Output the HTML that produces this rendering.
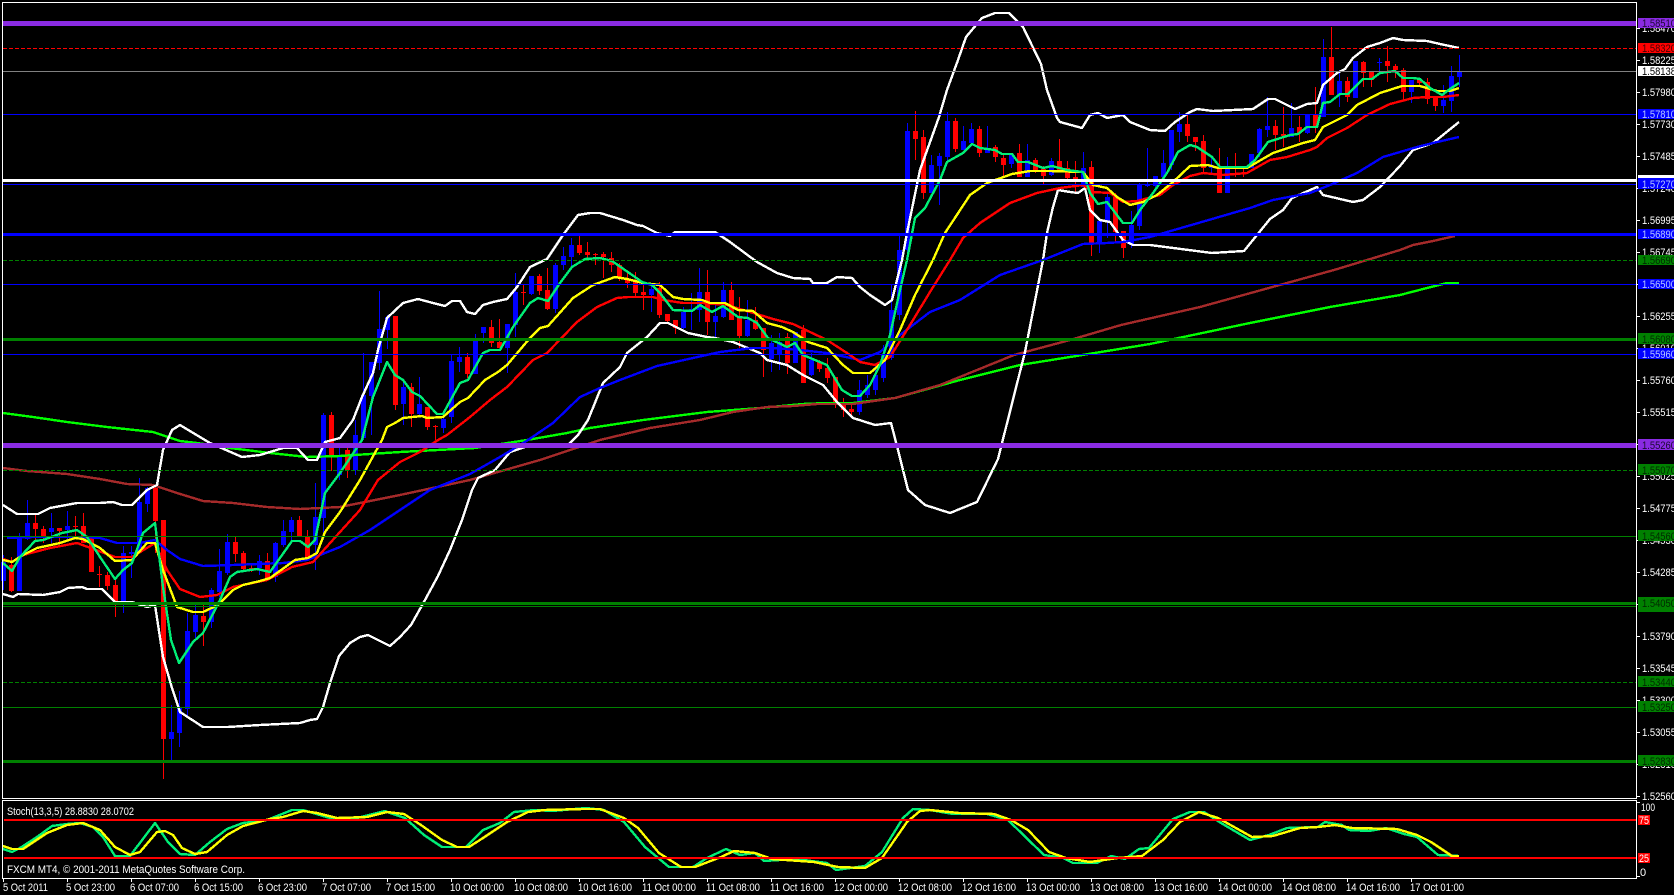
<!DOCTYPE html>
<html>
<head>
<meta charset="utf-8">
<title>FXCM MT4 chart</title>
<style>
html,body{margin:0;padding:0;background:#000;width:1674px;height:895px;overflow:hidden}
svg{display:block}
text{font-family:"Liberation Sans",sans-serif;font-size:11px;fill:#fff}
.l{fill:none;stroke-width:2.4;stroke-linejoin:round;shape-rendering:crispEdges}
.h{shape-rendering:crispEdges;fill:none}
</style>
</head>
<body>
<svg xmlns="http://www.w3.org/2000/svg" width="1674" height="895" viewBox="0 0 1674 895">
<rect width="1674" height="895" fill="#000"/>

<g transform="translate(.5,0)" class="h">
<path stroke="#0000ff" stroke-width="1" d="M3 555V590M19 533V591M27 500V540M51 513V543M67 511V540M123 546V613M131 546V578M139 478V553M147 487V512M171 705V760M179 691V747M187 613V717M195 603V638M211 588V628M219 549V597M227 534V575M259 555V575M275 542V582M283 520V547M291 517V543M315 483V570M323 413V540M339 445V480M355 420V475M363 353V440M371 362V435M379 291V370M387 315V349M403 380V425M419 377V415M443 412V433M451 355V423M459 347V372M475 334V374M483 327V343M507 324V373M515 273V337M531 276V295M555 263V313M563 247V270M571 238V267M651 285V312M683 307V329M691 293V330M699 268V322M715 303V337M723 282V318M747 300V337M771 335V372M779 333V370M795 332V363M811 353V376M859 380V415M867 375V398M875 365V395M883 345V382M891 285V360M899 235V320M907 123V260M931 155V193M939 153V205M947 112V162M963 126V150M971 123V143M987 126V153M1011 153V168M1027 144V177M1051 158V176M1083 152V187M1099 221V253M1107 193V238M1131 211V248M1139 183V230M1147 148V187M1155 176V187M1163 150V178M1171 130V170M1179 112V142M1211 157V175M1227 157V193M1251 154V168M1259 128V157M1267 97V137M1291 103V135M1307 115V134M1323 39V117M1339 70V107M1355 61V98M1379 58V73M1411 80V103M1443 85V113M1451 66V112M1459 55V87"/>
<path stroke="#0000ff" stroke-width="5" d="M3 562V581M19 538V591M27 523V539M51 528V532M67 526V530M123 553V601M131 552V554M139 502V552M147 488V504M171 732V739M179 708V733M187 631V709M195 615V632M211 590V622M219 571V592M227 542V573M259 561V568M275 543V577M283 531V545M291 520V532M315 517V545M323 415V518M339 455V475M355 435V470M363 395V438M371 362V396M379 329V363M387 317V330M403 387V404M419 404V414M443 419V428M451 361V417M459 357V362M475 341V374M483 327V333M507 324V348M515 292V325M531 276V294M555 265V309M563 256V265M571 245V257M651 289V295M683 312V328M691 309V310M699 292V310M715 316V322M723 290V317M747 320V336M771 343V359M779 342V354M795 332V363M811 360V375M859 390V412M867 385V395M875 375V390M883 355V378M891 310V358M899 250V315M907 131V250M931 165V193M939 156V166M947 121V157M963 141V150M971 129V143M987 149V153M1011 154V164M1027 160V177M1051 161V175M1083 168V187M1099 221V244M1107 197V221M1131 225V245M1139 185V226M1147 185V186M1155 176V186M1163 163V177M1171 130V165M1179 124V132M1211 165V168M1227 168V193M1251 154V168M1259 129V153M1267 126V130M1291 128V137M1307 115V133M1323 57V117M1339 81V95M1355 61V98M1379 62V63M1411 80V92M1443 100V106M1451 76V101M1459 71V77"/>
<path stroke="#ff0000" stroke-width="1" d="M11 557V592M35 515V540M43 526V543M59 528V543M75 516V537M83 513V543M91 538V572M99 566V587M107 572V590M115 580V617M155 485V553M163 520V779M203 605V646M235 537V562M243 551V570M251 563V572M267 553V580M299 516V537M307 530V558M331 412V471M347 445V478M395 316V410M411 383V427M427 407V430M435 425V440M467 353V378M491 320V347M499 319V348M523 284V305M539 274V295M547 268V310M579 236V255M587 242V258M595 253V265M603 252V278M611 252V272M619 263V281M627 272V288M635 272V297M643 283V310M659 282V318M667 314V322M675 320V334M707 270V335M731 282V320M739 297V348M755 307V330M763 328V377M787 333V374M803 325V383M819 360V372M827 358V383M835 377V408M843 398V417M851 403V417M915 111V160M923 130V199M955 118V152M979 126V157M995 145V162M1003 153V176M1019 144V177M1035 158V173M1043 166V184M1059 139V172M1067 161V180M1075 161V192M1091 161V256M1115 193V242M1123 231V258M1187 115V142M1195 137V151M1203 135V173M1219 148V193M1235 153V177M1243 167V177M1275 120V150M1283 107V147M1299 116V142M1315 87V133M1331 27V95M1347 77V102M1363 61V87M1371 72V87M1387 46V82M1395 64V78M1403 68V100M1419 78V85M1427 78V104M1435 97V111"/>
<path stroke="#ff0000" stroke-width="5" d="M11 565V591M35 523V529M43 529V537M59 528V531M75 526V527M83 526V543M91 538V572M99 574V575M107 575V586M115 585V602M155 488V521M163 520V739M203 616V622M235 542V554M243 553V569M251 568V570M267 561V578M299 520V537M307 537V558M331 415V455M347 450V470M395 316V405M411 387V414M427 407V427M435 426V427M467 357V374M491 327V343M499 342V348M523 292V293M539 276V291M547 290V309M579 245V253M587 252V255M595 254V255M603 254V257M611 258V265M619 265V277M627 279V283M635 281V293M643 292V295M659 288V315M667 314V321M675 320V328M707 292V322M731 290V320M739 318V336M755 320V329M763 328V350M787 337V363M803 330V383M819 362V369M827 368V378M835 377V403M843 405V410M851 409V412M915 131V139M923 137V193M955 121V149M979 129V153M995 147V157M1003 158V165M1019 153V177M1035 160V170M1043 169V176M1059 161V170M1067 168V178M1075 177V179M1091 167V243M1115 197V232M1123 231V248M1187 124V136M1195 137V142M1203 141V168M1219 167V193M1235 167V168M1243 167V168M1275 126V135M1283 134V136M1299 127V133M1315 115V127M1331 57V95M1347 81V97M1363 62V73M1371 72V80M1387 61V66M1395 66V70M1403 70V92M1419 80V83M1427 82V99M1435 97V106"/>
</g>

<!-- lime MA -->
<polyline class="l" stroke="#00ff00" points="3,413 33,417 67,422 107,427 153,432 180,441 197,443 230,448 270,453 307,457 340,456 400,452 475,448 527,440 567,433 590,428 643,420 707,412 760,408 803,404 827,403 853,403 895,398 960,380 1020,365 1070,357 1150,344 1250,323 1330,307 1400,295 1427,288 1447,283 1459,283"/>
<!-- brown MA -->
<polyline class="l" stroke="#a52a2a" points="3,468 27,471 67,474 100,479 127,484 153,485 177,493 203,501 233,503 267,507 300,509 340,507 400,495 470,480 540,460 600,440 650,428 700,420 733,412 767,407 793,406 817,404 853,404 895,398 940,385 1014,355 1070,340 1121,325 1200,307 1334,270 1400,250 1413,245 1433,241 1455,236"/>
<!-- bollinger upper -->
<polyline class="l" stroke="#ffffff" points="3,505 17,514 38,514 50,508 77,503 100,503 113,502 122,505 132,505 147,490 157,485 163,450 172,430 180,425 210,443 242,457 260,455 283,448 297,448 308,460 317,460 325,442 340,438 353,420 362,397 373,373 378,350 387,318 403,303 418,299 433,303 445,306 452,301 460,301 467,312 475,314 483,305 493,302 507,299 517,287 530,267 547,259 563,235 578,215 590,213 600,213 623,220 637,225 643,226 657,233 670,236 675,232 715,232 730,242 757,262 777,273 793,278 810,279 813,283 827,283 837,277 852,278 860,287 870,295 885,305 892,300 902,260 907,233 920,170 939,117 947,90 958,60 966,37 982,18 995,13 1009,13 1023,27 1041,64 1047,90 1057,118 1060,122 1082,128 1090,115 1098,113 1107,118 1123,115 1130,122 1150,130 1165,131 1175,122 1190,112 1197,109 1213,111 1253,109 1268,99 1275,99 1295,109 1307,104 1317,103 1323,85 1337,73 1345,69 1353,58 1367,47 1380,43 1393,38 1403,40 1427,41 1440,44 1459,48"/>
<!-- bollinger lower -->
<polyline class="l" stroke="#ffffff" points="3,594 13,597 18,594 43,595 60,592 68,588 82,587 87,589 102,589 115,602 132,602 147,607 155,605 163,657 172,688 180,712 203,727 228,727 260,725 300,723 310,720 317,719 323,707 330,683 339,656 350,643 360,637 368,635 378,640 390,646 400,637 411,625 425,600 438,576 450,550 462,520 472,490 478,478 495,470 510,452 525,447 566,447 578,435 588,420 603,383 620,367 627,353 647,337 660,323 668,323 688,333 707,337 715,338 733,342 760,353 767,360 787,365 803,375 823,385 837,402 853,418 875,425 891,423 898,450 908,490 925,505 950,513 977,502 998,459 1025,352 1043,260 1047,233 1053,207 1058,190 1070,192 1078,193 1085,188 1090,210 1100,220 1110,222 1123,240 1133,245 1150,245 1212,253 1244,251 1270,219 1283,210 1292,198 1317,187 1323,195 1353,202 1363,200 1380,187 1400,166 1413,150 1433,143 1459,122"/>
<!-- blue MA -->
<polyline class="l" stroke="#0000ff" points="7,538 33,537 83,537 100,538 117,543 140,543 155,540 167,550 180,559 203,566 233,565 283,563 307,560 320,555 340,547 370,530 400,510 430,490 470,474 500,457 528,440 553,423 580,397 600,388 620,380 657,366 693,358 720,352 753,348 773,348 800,350 827,353 860,360 880,352 900,335 930,312 960,300 1000,275 1043,260 1083,244 1107,243 1123,242 1150,237 1250,208 1273,200 1310,193 1330,185 1357,173 1383,157 1400,152 1417,147 1433,143 1459,137"/>
<!-- red MA -->
<polyline class="l" stroke="#ff0000" points="3,559 12,562 23,555 50,548 77,543 115,557 132,557 155,543 167,570 180,589 200,597 217,595 233,587 267,580 292,567 313,562 340,532 360,510 378,480 400,462 420,452 438,440 447,435 470,417 490,400 507,387 533,360 547,353 577,322 597,307 617,298 628,297 653,297 663,300 683,303 703,303 727,305 740,309 760,315 773,319 793,324 810,332 827,340 847,353 860,362 875,365 890,357 910,325 930,292 950,260 963,238 980,223 1010,203 1037,193 1060,188 1083,185 1093,192 1110,193 1123,202 1137,201 1160,195 1173,185 1190,176 1203,173 1223,175 1247,173 1270,160 1287,157 1310,150 1317,147 1327,138 1347,128 1367,115 1390,104 1413,98 1427,97 1443,97 1459,95"/>
<!-- yellow MA -->
<polyline class="l" stroke="#ffff00" points="3,560 12,562 23,555 37,548 60,543 75,538 83,539 100,548 115,561 132,560 147,543 155,543 163,570 177,607 193,612 203,612 218,605 233,590 243,585 260,581 270,578 295,560 308,558 317,553 325,532 340,512 360,480 382,440 387,427 395,423 403,418 422,416 427,418 443,417 460,402 468,398 485,380 498,372 507,365 530,338 540,328 548,326 573,298 593,285 615,277 627,279 643,283 660,285 673,297 683,299 702,300 710,303 725,303 738,310 753,311 767,323 782,327 793,332 808,342 827,348 843,365 853,373 870,373 885,360 900,330 915,295 933,260 945,233 970,195 987,183 1012,174 1030,171 1050,171 1083,172 1093,185 1107,188 1117,197 1130,205 1143,202 1157,195 1173,182 1190,166 1208,165 1218,168 1247,168 1273,153 1303,143 1315,140 1323,127 1347,115 1357,105 1380,93 1402,86 1420,86 1437,91 1450,91 1459,88"/>
<!-- teal MA -->
<polyline class="l" stroke="#00ee76" points="3,563 12,571 20,557 35,541 43,540 62,533 77,530 87,537 100,557 115,579 123,570 132,563 143,533 155,523 163,587 171,640 179,663 193,642 203,633 220,600 230,577 237,572 257,569 270,572 292,541 300,541 308,547 315,540 325,493 340,473 362,440 373,397 387,362 395,375 403,380 412,392 420,396 437,414 443,414 460,383 468,380 483,353 490,350 500,350 513,327 530,303 538,298 548,301 560,283 572,267 585,259 600,258 612,261 635,277 642,282 652,285 660,293 673,310 692,311 700,305 712,312 723,306 738,317 748,318 757,323 768,338 787,347 795,343 803,355 827,365 842,390 852,396 860,396 870,385 880,365 890,335 900,290 907,260 915,218 925,208 940,180 947,162 963,153 972,144 980,148 995,150 1002,154 1012,154 1018,162 1028,162 1043,168 1052,166 1067,170 1083,172 1090,193 1098,204 1107,202 1123,223 1132,223 1140,210 1153,193 1167,173 1178,152 1190,145 1197,147 1212,157 1220,167 1247,167 1255,160 1268,142 1290,135 1298,134 1307,127 1317,127 1323,103 1330,102 1340,94 1348,94 1363,79 1372,79 1380,73 1395,71 1403,78 1413,78 1420,79 1430,88 1442,95 1450,89 1459,83"/>

<!-- horizontal objects -->
<g class="h">
<rect x="3" y="21" width="1633" height="5" fill="#8a2be2"/>
<path d="M3 48.5H1636" stroke="#ff0000" stroke-dasharray="4 2"/>
<path d="M3 71.5H1636" stroke="#808080"/>
<path d="M3 114.5H1636" stroke="#0000ff"/>
<rect x="3" y="179" width="1633" height="3" fill="#ffffff"/>
<path d="M3 184.5H1636" stroke="#0000ff"/>
<rect x="3" y="233" width="1633" height="3" fill="#0000ff"/>
<path d="M3 260.5H1636" stroke="#008000" stroke-dasharray="4 2"/>
<path d="M3 284.5H1636" stroke="#0000ff"/>
<rect x="3" y="338" width="1633" height="3" fill="#008000"/>
<path d="M3 354.5H1636" stroke="#0000ff"/>
<rect x="3" y="443" width="1633" height="5" fill="#8a2be2"/>
<path d="M3 470.5H1636" stroke="#008000" stroke-dasharray="4 2"/>
<path d="M3 536.5H1636" stroke="#008000"/>
<rect x="3" y="602" width="1633" height="3" fill="#008000"/>
<path d="M3 606.5H1636" stroke="#008000"/>
<path d="M3 682.5H1636" stroke="#008000" stroke-dasharray="4 2"/>
<path d="M3 707.5H1636" stroke="#008000"/>
<rect x="3" y="760" width="1633" height="3" fill="#008000"/>
</g>

<!-- stochastic -->
<polyline class="l" stroke="#00ee76" points="3,849 12,852 20,848 37,837 52,826 67,824 80,823 93,827 103,837 115,856 130,856 155,823 168,842 180,854 195,855 210,842 227,829 243,823 267,820 292,810 303,810 330,818 357,818 385,811 390,813 405,818 424,835 442,847 466,847 483,830 500,823 514,812 535,810 552,811 586,808 604,810 624,822 645,847 669,867 693,867 707,858 726,849 740,855 755,853 764,861 796,859 827,863 836,870 865,866 882,852 903,818 913,809 930,810 953,814 987,814 1008,820 1044,855 1063,858 1073,863 1097,863 1111,856 1125,859 1139,849 1149,848 1173,819 1190,812 1204,812 1221,823 1250,840 1269,835 1287,828 1318,827 1325,822 1342,825 1349,830 1369,831 1386,828 1404,834 1417,837 1438,855 1459,856"/>
<polyline class="l" stroke="#ffff00" points="3,846 12,849 23,849 47,833 67,825 83,823 100,830 115,847 130,855 140,852 157,832 165,831 173,835 182,848 195,854 207,852 227,835 243,826 270,819 283,817 303,811 317,813 337,818 367,817 387,812 404,814 421,825 442,840 457,847 469,847 483,838 507,822 528,812 545,810 583,809 600,809 624,818 638,828 659,853 681,867 695,867 721,857 734,851 755,853 772,859 814,862 838,867 865,868 882,858 907,822 920,811 930,810 959,813 994,814 1011,820 1028,830 1049,852 1066,858 1090,862 1118,858 1142,856 1163,840 1180,822 1199,812 1218,818 1252,837 1273,836 1300,828 1318,827 1335,825 1352,828 1397,829 1417,835 1431,842 1452,856 1459,856"/>
<g class="h">
<rect x="4" y="819" width="1632" height="2" fill="#ff0000"/>
<rect x="4" y="857" width="1632" height="2" fill="#ff0000"/>
</g>

<!-- frames -->
<g class="h" stroke="#ffffff" stroke-width="1">
<path d="M2.5 2.5H1636.5V798.5H2.5Z"/>
<path d="M2.5 800.5H1636.5V878.5H2.5Z"/>
<path d="M1637 28.5h3M1637 60.5h3M1637 92.5h3M1637 124.5h3M1637 156.5h3M1637 188.5h3M1637 220.5h3M1637 252.5h3M1637 284.5h3M1637 316.5h3M1637 348.5h3M1637 380.5h3M1637 412.5h3M1637 444.5h3M1637 476.5h3M1637 508.5h3M1637 540.5h3M1637 572.5h3M1637 604.5h3M1637 636.5h3M1637 668.5h3M1637 700.5h3M1637 732.5h3M1637 764.5h3M1637 796.5h3M1637 802.5h3M1637 876.5h3"/>
<path d="M3.5 879v3M67.5 879v3M131.5 879v3M195.5 879v3M259.5 879v3M323.5 879v3M387.5 879v3M451.5 879v3M515.5 879v3M579.5 879v3M643.5 879v3M707.5 879v3M771.5 879v3M835.5 879v3M899.5 879v3M963.5 879v3M1027.5 879v3M1091.5 879v3M1155.5 879v3M1219.5 879v3M1283.5 879v3M1347.5 879v3M1411.5 879v3"/>
</g>

<!-- price axis -->
<g>
<text x="1642" y="32" textLength="34" lengthAdjust="spacingAndGlyphs">1.58470</text>
<text x="1642" y="64" textLength="34" lengthAdjust="spacingAndGlyphs">1.58225</text>
<text x="1642" y="96" textLength="34" lengthAdjust="spacingAndGlyphs">1.57980</text>
<text x="1642" y="128" textLength="34" lengthAdjust="spacingAndGlyphs">1.57730</text>
<text x="1642" y="160" textLength="34" lengthAdjust="spacingAndGlyphs">1.57485</text>
<text x="1642" y="192" textLength="34" lengthAdjust="spacingAndGlyphs">1.57240</text>
<text x="1642" y="224" textLength="34" lengthAdjust="spacingAndGlyphs">1.56995</text>
<text x="1642" y="256" textLength="34" lengthAdjust="spacingAndGlyphs">1.56745</text>
<text x="1642" y="288" textLength="34" lengthAdjust="spacingAndGlyphs">1.56500</text>
<text x="1642" y="320" textLength="34" lengthAdjust="spacingAndGlyphs">1.56255</text>
<text x="1642" y="352" textLength="34" lengthAdjust="spacingAndGlyphs">1.56010</text>
<text x="1642" y="384" textLength="34" lengthAdjust="spacingAndGlyphs">1.55760</text>
<text x="1642" y="416" textLength="34" lengthAdjust="spacingAndGlyphs">1.55515</text>
<text x="1642" y="448" textLength="34" lengthAdjust="spacingAndGlyphs">1.55270</text>
<text x="1642" y="480" textLength="34" lengthAdjust="spacingAndGlyphs">1.55025</text>
<text x="1642" y="512" textLength="34" lengthAdjust="spacingAndGlyphs">1.54775</text>
<text x="1642" y="544" textLength="34" lengthAdjust="spacingAndGlyphs">1.54530</text>
<text x="1642" y="576" textLength="34" lengthAdjust="spacingAndGlyphs">1.54285</text>
<text x="1642" y="608" textLength="34" lengthAdjust="spacingAndGlyphs">1.54040</text>
<text x="1642" y="640" textLength="34" lengthAdjust="spacingAndGlyphs">1.53790</text>
<text x="1642" y="672" textLength="34" lengthAdjust="spacingAndGlyphs">1.53545</text>
<text x="1642" y="704" textLength="34" lengthAdjust="spacingAndGlyphs">1.53300</text>
<text x="1642" y="736" textLength="34" lengthAdjust="spacingAndGlyphs">1.53055</text>
<text x="1642" y="768" textLength="34" lengthAdjust="spacingAndGlyphs">1.52810</text>
<text x="1642" y="800" textLength="34" lengthAdjust="spacingAndGlyphs">1.52560</text>
<text x="1641" y="811" textLength="14" lengthAdjust="spacingAndGlyphs">100</text>
<text x="1640" y="876">0</text>
</g>

<!-- price labels -->
<g class="h">
<rect x="1638" y="18" width="36" height="10" fill="#8a2be2"/>
<rect x="1638" y="43" width="36" height="10" fill="#ff0000"/>
<rect x="1638" y="66" width="36" height="10" fill="#ffffff"/>
<rect x="1638" y="109" width="36" height="10" fill="#0000ff"/>
<rect x="1638" y="175" width="36" height="10" fill="#ffffff"/>
<rect x="1638" y="178" width="36" height="11" fill="#0000ff"/>
<rect x="1638" y="229" width="36" height="10" fill="#0000ff"/>
<rect x="1638" y="255" width="36" height="10" fill="#008000"/>
<rect x="1638" y="279" width="36" height="10" fill="#0000ff"/>
<rect x="1638" y="333" width="36" height="11" fill="#008000"/>
<rect x="1638" y="348" width="36" height="11" fill="#0000ff"/>
<rect x="1638" y="439" width="36" height="11" fill="#8a2be2"/>
<rect x="1638" y="464" width="36" height="11" fill="#008000"/>
<rect x="1638" y="530" width="36" height="11" fill="#008000"/>
<rect x="1638" y="597" width="36" height="11" fill="#008000"/>
<rect x="1638" y="601" width="36" height="11" fill="#008000"/>
<rect x="1638" y="676" width="36" height="11" fill="#008000"/>
<rect x="1638" y="701" width="36" height="11" fill="#008000"/>
<rect x="1638" y="755" width="36" height="11" fill="#008000"/>
<rect x="1638" y="815" width="12" height="10" fill="#ff0000"/>
<rect x="1638" y="853" width="12" height="10" fill="#ff0000"/>
</g>
<g>
<text x="1642" y="27" textLength="34" lengthAdjust="spacingAndGlyphs" style="fill:#1a0a30">1.58510</text>
<text x="1642" y="52" textLength="34" lengthAdjust="spacingAndGlyphs" style="fill:#400">1.58320</text>
<text x="1642" y="75" textLength="34" lengthAdjust="spacingAndGlyphs" style="fill:#000">1.58138</text>
<text x="1642" y="118" textLength="34" lengthAdjust="spacingAndGlyphs" style="fill:#b8c8ff">1.57810</text>
<text x="1642" y="188" textLength="34" lengthAdjust="spacingAndGlyphs" style="fill:#b8c8ff">1.57270</text>
<text x="1642" y="238" textLength="34" lengthAdjust="spacingAndGlyphs" style="fill:#b8c8ff">1.56890</text>
<text x="1642" y="264" textLength="34" lengthAdjust="spacingAndGlyphs" style="fill:#002a00">1.56690</text>
<text x="1642" y="288" textLength="34" lengthAdjust="spacingAndGlyphs" style="fill:#b8c8ff">1.56500</text>
<text x="1642" y="343" textLength="34" lengthAdjust="spacingAndGlyphs" style="fill:#002a00">1.56080</text>
<text x="1642" y="358" textLength="34" lengthAdjust="spacingAndGlyphs" style="fill:#b8c8ff">1.55960</text>
<text x="1642" y="449" textLength="34" lengthAdjust="spacingAndGlyphs" style="fill:#1a0a30">1.55260</text>
<text x="1642" y="474" textLength="34" lengthAdjust="spacingAndGlyphs" style="fill:#002a00">1.55070</text>
<text x="1642" y="540" textLength="34" lengthAdjust="spacingAndGlyphs" style="fill:#002a00">1.54560</text>
<text x="1642" y="607" textLength="34" lengthAdjust="spacingAndGlyphs" style="fill:#002a00">1.54050</text>
<text x="1642" y="686" textLength="34" lengthAdjust="spacingAndGlyphs" style="fill:#002a00">1.53440</text>
<text x="1642" y="711" textLength="34" lengthAdjust="spacingAndGlyphs" style="fill:#002a00">1.53250</text>
<text x="1642" y="765" textLength="34" lengthAdjust="spacingAndGlyphs" style="fill:#002a00">1.52830</text>
<text x="1639" y="824" textLength="10" lengthAdjust="spacingAndGlyphs">75</text>
<text x="1639" y="862" textLength="10" lengthAdjust="spacingAndGlyphs">25</text>
</g>

<!-- chart text -->
<text x="7" y="815" textLength="127" lengthAdjust="spacingAndGlyphs">Stoch(13,3,5) 28.8830 28.0702</text>
<text x="7" y="873" textLength="238" lengthAdjust="spacingAndGlyphs">FXCM MT4, © 2001-2011 MetaQuotes Software Corp.</text>

<!-- time axis -->
<g>
<text x="3" y="891" textLength="45" lengthAdjust="spacingAndGlyphs">5 Oct 2011</text>
<text x="66" y="891" textLength="49" lengthAdjust="spacingAndGlyphs">5 Oct 23:00</text>
<text x="130" y="891" textLength="49" lengthAdjust="spacingAndGlyphs">6 Oct 07:00</text>
<text x="194" y="891" textLength="49" lengthAdjust="spacingAndGlyphs">6 Oct 15:00</text>
<text x="258" y="891" textLength="49" lengthAdjust="spacingAndGlyphs">6 Oct 23:00</text>
<text x="322" y="891" textLength="49" lengthAdjust="spacingAndGlyphs">7 Oct 07:00</text>
<text x="386" y="891" textLength="49" lengthAdjust="spacingAndGlyphs">7 Oct 15:00</text>
<text x="450" y="891" textLength="54" lengthAdjust="spacingAndGlyphs">10 Oct 00:00</text>
<text x="514" y="891" textLength="54" lengthAdjust="spacingAndGlyphs">10 Oct 08:00</text>
<text x="578" y="891" textLength="54" lengthAdjust="spacingAndGlyphs">10 Oct 16:00</text>
<text x="642" y="891" textLength="54" lengthAdjust="spacingAndGlyphs">11 Oct 00:00</text>
<text x="706" y="891" textLength="54" lengthAdjust="spacingAndGlyphs">11 Oct 08:00</text>
<text x="770" y="891" textLength="54" lengthAdjust="spacingAndGlyphs">11 Oct 16:00</text>
<text x="834" y="891" textLength="54" lengthAdjust="spacingAndGlyphs">12 Oct 00:00</text>
<text x="898" y="891" textLength="54" lengthAdjust="spacingAndGlyphs">12 Oct 08:00</text>
<text x="962" y="891" textLength="54" lengthAdjust="spacingAndGlyphs">12 Oct 16:00</text>
<text x="1026" y="891" textLength="54" lengthAdjust="spacingAndGlyphs">13 Oct 00:00</text>
<text x="1090" y="891" textLength="54" lengthAdjust="spacingAndGlyphs">13 Oct 08:00</text>
<text x="1154" y="891" textLength="54" lengthAdjust="spacingAndGlyphs">13 Oct 16:00</text>
<text x="1218" y="891" textLength="54" lengthAdjust="spacingAndGlyphs">14 Oct 00:00</text>
<text x="1282" y="891" textLength="54" lengthAdjust="spacingAndGlyphs">14 Oct 08:00</text>
<text x="1346" y="891" textLength="54" lengthAdjust="spacingAndGlyphs">14 Oct 16:00</text>
<text x="1410" y="891" textLength="54" lengthAdjust="spacingAndGlyphs">17 Oct 01:00</text>
</g>
</svg>
</body>
</html>
